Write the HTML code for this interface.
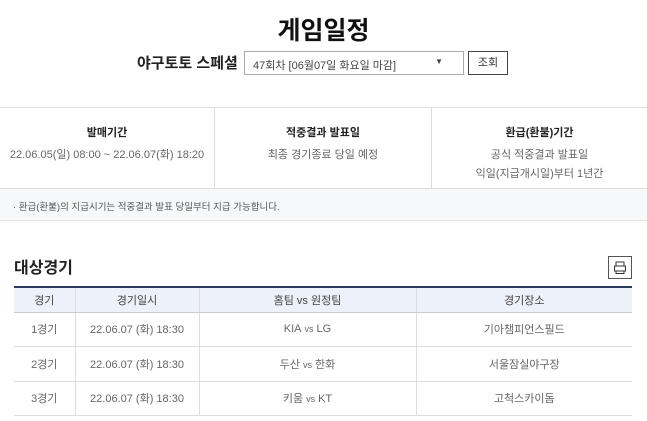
<!DOCTYPE html>
<html><head><meta charset="utf-8"><style>
*{margin:0;padding:0;box-sizing:border-box}
body{width:647px;height:421px;overflow:hidden;background:#fff;font-family:"Liberation Sans","Noto Sans CJK KR",sans-serif;color:#333;position:relative}
.a{position:absolute}
.title{left:0;width:647px;top:11px;text-align:center;font-size:25px;font-weight:bold;color:#111}
.lbl{left:137px;top:52px;font-size:15px;font-weight:600;color:#222}
.sel{left:244px;top:51px;width:220px;height:24px;border:1px solid #aaa;font-size:11px;padding:5px 8px;color:#444}
.btn{left:468px;top:51px;width:40px;height:24px;border:1px solid #444;font-size:11px;text-align:center;line-height:22px}
.info{left:0;top:107px;width:647px;height:82px;border-top:1px solid #ddd;border-bottom:1px solid #ddd}
.col{top:0;height:80px;text-align:center;font-size:11px;color:#666}
.col b{display:block;margin-top:16px;margin-bottom:6px;color:#222;font-size:11px;font-weight:600}
.col p{line-height:19px}
.note{left:0;top:189px;width:647px;height:32px;background:#f7f8fa;border-bottom:1px solid #e5e5e5;font-size:9.5px;color:#555;padding:10px 0 0 13px}
h2{position:absolute;left:14px;top:254px;font-size:16px;color:#222}
.pr{left:608px;top:256px;width:24px;height:23px;border:1px solid #555}
table{position:absolute;left:14px;top:286px;width:618px;border-collapse:collapse;font-size:11px;color:#666;border-top:2px solid #2b3a5c}
th{background:#edf1f9;font-weight:normal;color:#444;height:25px;border-bottom:1px solid #ccc}
td{height:34.5px;border-bottom:1px solid #ddd;text-align:center}
th,td{border-left:1px solid #ddd}
th:first-child,td:first-child{border-left:none}
small{font-size:9px;margin:0 3px}
</style></head><body>
<div class="a title">게임일정</div>
<div class="a lbl">야구토토 스페셜</div>
<div class="a sel">47회차 [06월07일 화요일 마감]<span style="position:absolute;right:20px;top:5px;font-size:8px">▼</span></div>
<div class="a btn">조회</div>
<div class="a info">
<div class="a col" style="left:0;width:214px"><b>발매기간</b><p>22.06.05(일) 08:00 ~ 22.06.07(화) 18:20</p></div>
<div class="a col" style="left:214px;width:217px;border-left:1px solid #ddd"><b>적중결과 발표일</b><p>최종 경기종료 당일 예정</p></div>
<div class="a col" style="left:431px;width:216px;border-left:1px solid #ddd"><b>환급(환불)기간</b><p>공식 적중결과 발표일<br>익일(지급개시일)부터 1년간</p></div>
</div>
<div class="a note">· 환급(환불)의 지급시기는 적중결과 발표 당일부터 지급 가능합니다.</div>
<h2>대상경기</h2>
<div class="a pr"><svg width="22" height="21" viewBox="0 0 22 21"><rect x="7" y="5" width="8" height="4" fill="none" stroke="#333"/><rect x="5.5" y="9" width="11" height="5" fill="none" stroke="#333"/><rect x="7" y="14" width="8" height="2.5" fill="none" stroke="#333"/></svg></div>
<table>
<tr><th style="width:61px">경기</th><th style="width:124px">경기일시</th><th style="width:217px">홈팀 vs 원정팀</th><th>경기장소</th></tr>
<tr><td>1경기</td><td>22.06.07 (화) 18:30</td><td>KIA<small>vs</small>LG</td><td>기아챔피언스필드</td></tr>
<tr><td>2경기</td><td>22.06.07 (화) 18:30</td><td>두산<small>vs</small>한화</td><td>서울잠실야구장</td></tr>
<tr><td>3경기</td><td>22.06.07 (화) 18:30</td><td>키움<small>vs</small>KT</td><td>고척스카이돔</td></tr>
</table>
</body></html>
